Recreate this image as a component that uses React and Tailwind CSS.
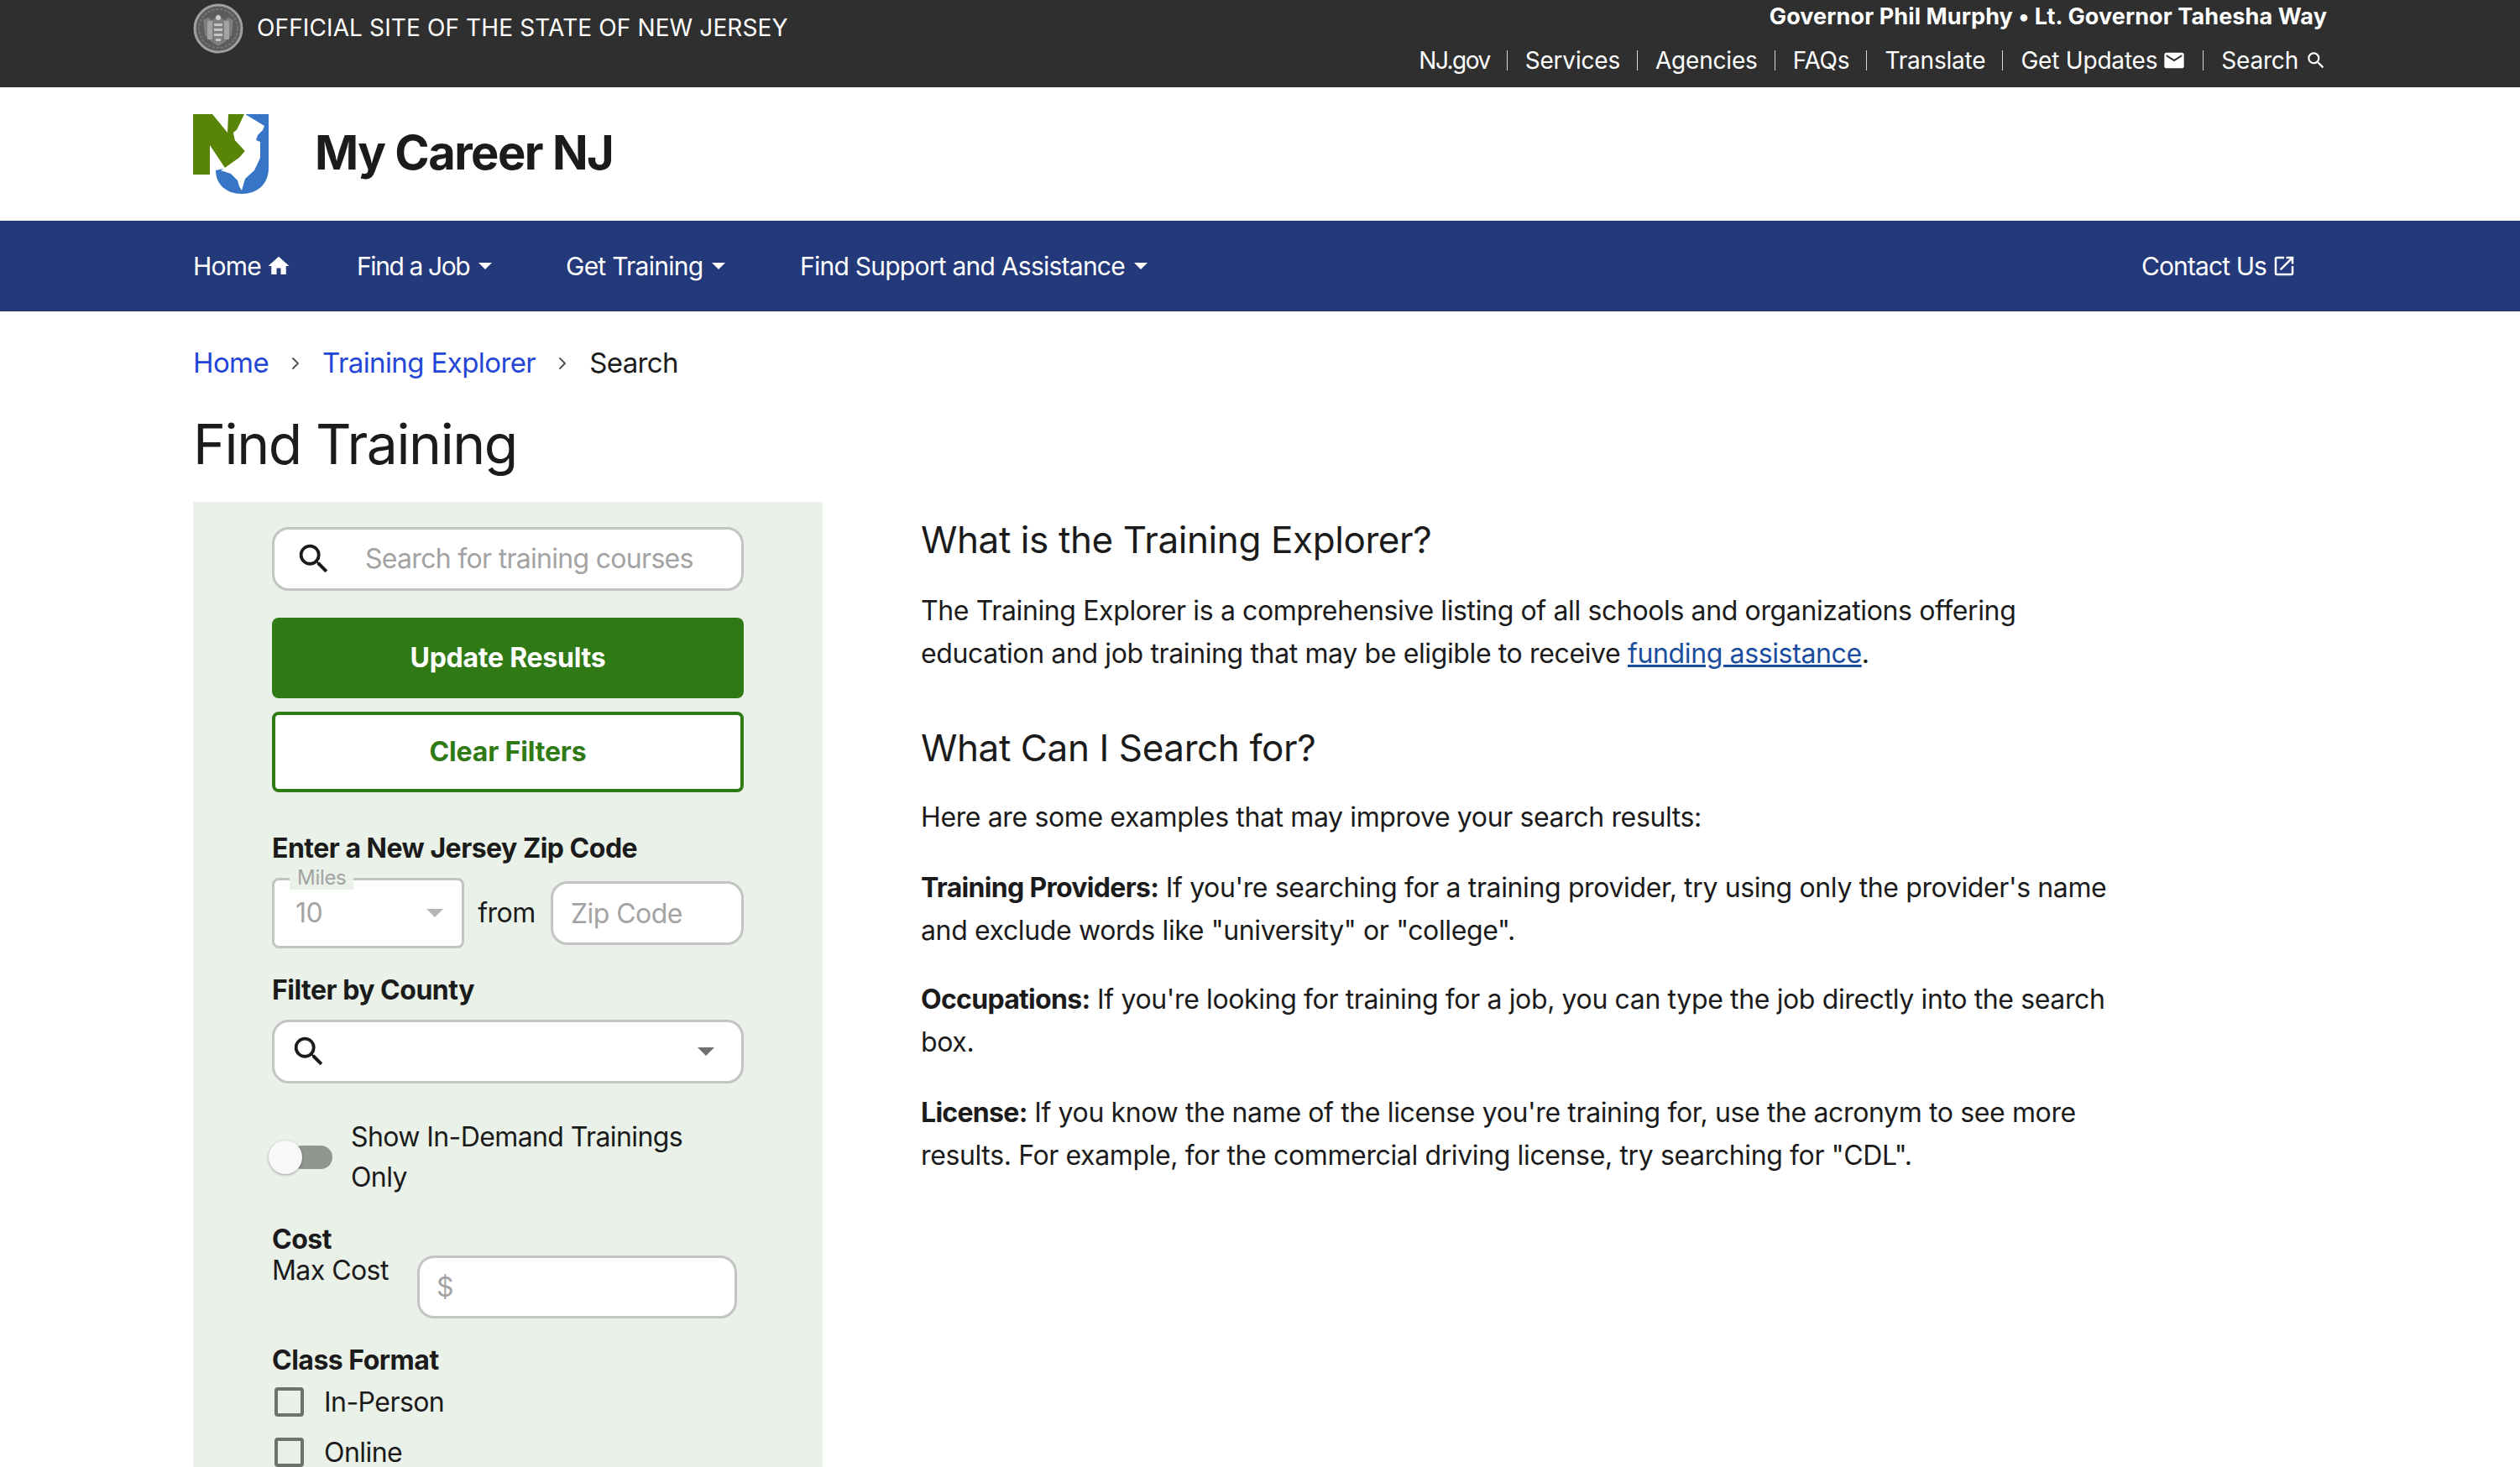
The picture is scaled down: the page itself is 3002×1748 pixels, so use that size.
import React from "react";
import { MdSearch, MdHome, MdEmail, MdOpenInNew } from "react-icons/md";
import { ChevronRight } from "lucide-react";

const Caret = ({ className }) => (
  <svg viewBox="0 0 10 5" className={className} fill="currentColor">
    <path d="M0 0h10L5 5z" />
  </svg>
);

const Seal = () => (
  <svg viewBox="0 0 60 60" className="w-[60px] h-[60px] shrink-0">
    <circle cx="30" cy="30" r="28" fill="#5c5c5c" stroke="#a0a0a0" strokeWidth="3" />
    <circle cx="30" cy="30" r="23" fill="none" stroke="#767676" strokeWidth="2" strokeDasharray="3 2" />
    <path d="M12 20l6-3 5 3 7-7 7 7 5-3 6 3-2 18-8 8-8 5-8-5-8-8z" fill="#7d7d7d" />
    <path d="M17 21h6v22h-6zM37 21h6v22h-6z" fill="#a2a2a2" />
    <path d="M25 24h10v3H25zM25 30h10v3H25zM25 36h10v3H25zM27 42h6v3h-6z" fill="#c4c4c4" />
    <circle cx="30" cy="17" r="3" fill="#cfcfcf" />
  </svg>
);

const NjLogo = () => (
  <svg viewBox="0 0 90 95" className="w-[90px] h-[95px] shrink-0">
    <path d="M63 0H90V64C90 84 76 95 58 95C40 95 27 84 27 67L36 65H63Z" fill="#3776c6" />
    <path
      d="M0 0H23L41 22L42 0H61L52 19L48 22L50 31L62 44L55 52L38 64L20 37V72H0Z"
      fill="#588506"
    />
    <path
      d="M62 0L85 14L83 19L77 25L75 31L80 33L80 52L73 67L62 77L58 91L55 86L53 79L45 71L33 67L38 64L55 52L62 44L50 31L48 22L52 19Z"
      fill="#fff"
    />
  </svg>
);

const TopLink = ({ children, last }) => (
  <span className={`flex items-center h-[24px] ${last ? "" : "border-r border-[#d8d8d8] pr-[20px] mr-[21px]"}`}>
    {children}
  </span>
);

const NavItem = ({ label }) => (
  <span className="flex items-center gap-[11px]">
    {label}
    <Caret className="w-[16px] h-[8px]" />
  </span>
);

const Label = ({ children, className = "" }) => (
  <div className={`font-bold text-[32px] leading-[40px] tracking-[-0.5px] ${className}`}>{children}</div>
);

const Checkbox = ({ label }) => (
  <div className="flex items-center h-[35px]">
    <span className="w-[35px] h-[35px] ml-[3px] border-[4px] border-[#6c736d] rounded-[4px]"></span>
    <span className="ml-[24px]">{label}</span>
  </div>
);

const Para = ({ children, className = "" }) => (
  <p className={`text-[32px] leading-[51px] tracking-[-0.37px] [&>b]:tracking-[-0.7px] ${className}`}>{children}</p>
);

const App = () => {
  return (
    <div className="h-screen overflow-hidden bg-white text-[#1b1b1b] font-[Inter,sans-serif]">
      {/* TOP BAR */}
      <div className="h-[104px] bg-[#2f2f2f] text-white px-[230px] flex justify-between">
        <div className="flex items-start gap-[16px] pt-[4px]">
          <Seal />
          <span className="text-[28px] leading-[58px] tracking-[0.12px]">
            OFFICIAL SITE OF THE STATE OF NEW JERSEY
          </span>
        </div>
        <div className="flex flex-col items-end">
          <div className="font-bold text-[27px] leading-[40px] tracking-[0.1px]">
            Governor Phil Murphy • Lt. Governor Tahesha Way
          </div>
          <div className="flex items-center h-[24px] mt-[20px] text-[28px] tracking-[-0.2px]">
            <TopLink>
              <span className="tracking-[-1.5px]">NJ.gov</span>
            </TopLink>
            <TopLink>Services</TopLink>
            <TopLink>Agencies</TopLink>
            <TopLink>FAQs</TopLink>
            <TopLink>Translate</TopLink>
            <TopLink>
              Get Updates
              <MdEmail size={28} className="ml-[6px]" />
            </TopLink>
            <TopLink last>
              Search
              <MdSearch size={26} className="ml-[8px]" />
            </TopLink>
          </div>
        </div>
      </div>

      {/* LOGO ROW */}
      <div className="h-[159px] px-[230px] flex items-center gap-[55px]">
        <NjLogo />
        <span className="font-bold text-[56px] tracking-[-1.5px] -mt-[4px]">My Career NJ</span>
      </div>

      {/* NAV */}
      <div className="h-[108px] bg-[#23397a] text-white px-[230px] flex items-center text-[30px] tracking-[-0.75px]">
        <span className="flex items-center gap-[6px] w-[195px]">
          Home
          <MdHome size={30} />
        </span>
        <span className="w-[249px] tracking-[-1.4px]">
          <NavItem label="Find a Job" />
        </span>
        <span className="w-[279px]">
          <NavItem label="Get Training" />
        </span>
        <NavItem label="Find Support and Assistance" />
        <span className="ml-auto mr-[36px] flex items-center gap-[6px] tracking-[-0.9px]">
          Contact Us
          <MdOpenInNew size={30} />
        </span>
      </div>

      {/* BREADCRUMB */}
      <div className="px-[230px] mt-[42px] flex items-center h-[40px] text-[33px] tracking-[-0.6px]">
        <span className="text-[#2446d6]">Home</span>
        <ChevronRight size={24} className="mx-[20px] text-[#555]" />
        <span className="text-[#2446d6]">Training Explorer</span>
        <ChevronRight size={24} className="mx-[20px] text-[#555]" />
        <span>Search</span>
      </div>

      <h1 className="px-[230px] mt-[36px] text-[66px] leading-[80px] tracking-[-1.4px]">Find Training</h1>

      {/* MAIN */}
      <div className="px-[230px] mt-[29px] flex items-start">
        {/* FILTERS */}
        <div className="w-[750px] h-[1200px] shrink-0 bg-[#e9f1e8] px-[94px] pt-[30px] text-[32px] tracking-[-0.55px]">
          <div className="h-[76px] bg-white border-[3px] border-[#c4c4c4] rounded-[20px] flex items-center">
            <MdSearch size={46} className="ml-[24px] shrink-0" />
            <input
              readOnly
              placeholder="Search for training courses"
              className="ml-[38px] w-full outline-none tracking-[-0.7px] placeholder:text-[#a3a3a3]"
            />
          </div>

          <div className="mt-[32px] h-[96px] bg-[#2f7a15] rounded-[8px] text-white font-bold flex items-center justify-center tracking-[-0.25px]">
            Update Results
          </div>
          <div className="mt-[16px] h-[96px] bg-white border-[4px] border-[#2f7a15] rounded-[8px] text-[#2f7a15] font-bold flex items-center justify-center tracking-[-0.15px]">
            Clear Filters
          </div>

          <Label className="mt-[47px]">Enter a New Jersey Zip Code</Label>
          <div className="flex items-center mt-[15px]">
            <div className="relative w-[230px] h-[84px] bg-white border-[3px] border-[#c4c4c4] rounded-[8px] flex items-center justify-between pl-[25px] pr-[22px] text-[#a3a3a3]">
              <span className="absolute left-[18px] -top-[17px] bg-[#e9f1e8] px-[9px] text-[24px] leading-[28px] tracking-[-0.3px] text-[#a3a3a3]">
                Miles
              </span>
              <span>10</span>
              <Caret className="w-[20px] h-[10px] text-[#b5b5b5]" />
            </div>
            <span className="mx-[16px] w-[71px]">from</span>
            <input
              readOnly
              placeholder="Zip Code"
              className="w-[230px] h-[76px] bg-white border-[3px] border-[#c4c4c4] rounded-[20px] px-[21px] outline-none placeholder:text-[#a3a3a3]"
            />
          </div>

          <Label className="mt-[30px]">Filter by County</Label>
          <div className="mt-[15px] h-[76px] bg-white border-[3px] border-[#c4c4c4] rounded-[20px] flex items-center justify-between pl-[18px] pr-[32px]">
            <MdSearch size={46} />
            <Caret className="w-[20px] h-[10px] text-[#707070]" />
          </div>

          <div className="flex mt-[40px] leading-[48px] tracking-[-0.6px]">
            <div className="relative w-[94px] shrink-0">
              <span className="absolute left-[22px] top-[34px] w-[50px] h-[28px] bg-[#919690] rounded-full"></span>
              <span className="absolute -left-[4px] top-[28px] w-[40px] h-[40px] bg-[#f8f8f8] rounded-full shadow-[0_1px_3px_rgba(0,0,0,0.35)]"></span>
            </div>
            <div className="w-[440px]">Show In-Demand Trainings Only</div>
          </div>

          <Label className="mt-[30px]">Cost</Label>
          <div className="flex items-start">
            <span className="leading-[34px] w-[173px]">Max Cost</span>
            <div className="w-[381px] h-[75px] -mt-[1px] bg-white border-[3px] border-[#c4c4c4] rounded-[20px] flex items-center pl-[20px] text-[#a3a3a3]">
              $
            </div>
          </div>

          <Label className="mt-[30px]">Class Format</Label>
          <div className="mt-[12px] flex flex-col gap-[25px]">
            <Checkbox label="In-Person" />
            <Checkbox label="Online" />
          </div>
        </div>

        {/* INTRO COPY */}
        <div className="ml-[117px] pt-[20px]">
          <h2 className="text-[44px] leading-[50px] tracking-[-0.4px]">What is the Training Explorer?</h2>
          <Para className="mt-[34px]">
            The Training Explorer is a comprehensive listing of all schools and organizations offering
            <br />
            education and job training that may be eligible to receive{" "}
            <span className="text-[#1b4d9e] underline">funding assistance</span>.
          </Para>
          <h2 className="mt-[62px] text-[44px] leading-[50px] tracking-[-0.4px]">What Can I Search for?</h2>
          <Para className="mt-[32px]">Here are some examples that may improve your search results:</Para>
          <Para className="mt-[33px]">
            <b>Training Providers:</b> If you're searching for a training provider, try using only the provider's name
            <br />
            and exclude words like "university" or "college".
          </Para>
          <Para className="mt-[31px]">
            <b>Occupations:</b> If you're looking for training for a job, you can type the job directly into the search
            <br />
            box.
          </Para>
          <Para className="mt-[33px]">
            <b>License:</b> If you know the name of the license you're training for, use the acronym to see more
            <br />
            results. For example, for the commercial driving license, try searching for "CDL".
          </Para>
        </div>
      </div>
    </div>
  );
};

export default App;
